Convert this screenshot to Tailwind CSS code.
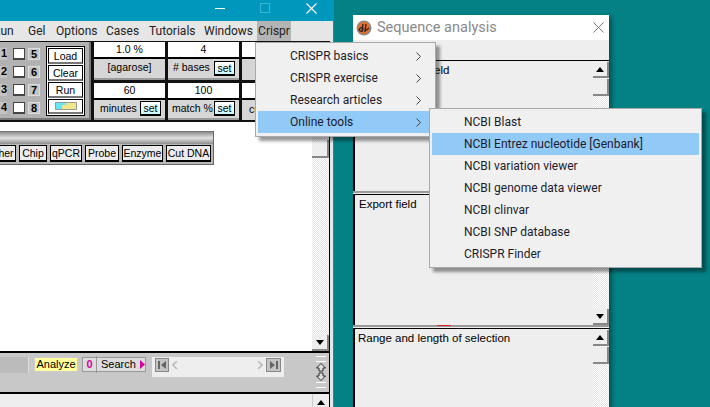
<!DOCTYPE html>
<html lang="en">
<head>
<meta charset="UTF-8">
<title>Crispr online tools</title>
<script src="https://cdn.jsdelivr.net/npm/@tailwindcss/browser@4"></script>
</head>
<body class="bg-[#038185] overflow-hidden">
<div class="relative w-[710px] h-[407px] overflow-hidden font-['Liberation_Sans',sans-serif] whitespace-nowrap">

  <!-- main window -->
  <div class="absolute left-0 top-0 w-[334px] h-[407px] bg-[#e6e6e6] border-r border-[#0097bd] flex flex-col overflow-hidden">
    <div class="h-[21px] shrink-0 bg-[#0097bd] flex items-center relative">
      <div class="absolute left-[215px] top-[8px] w-[10px] h-px bg-white"></div>
      <div class="absolute left-[260px] top-[3px] w-[10px] h-[10px] border border-[#3fb4d2]"></div>
      <svg class="absolute left-[306px] top-[3px]" width="11" height="11" viewBox="0 0 11 11"><path d="M0.5 0.5 10.5 10.5M10.5 0.5 0.5 10.5" stroke="#fff" stroke-width="1.1"/></svg>
    </div>
    <!-- menu bar -->
    <div class="h-[20px] shrink-0 bg-[#e6e6e6] flex items-center text-[12px] font-['Roboto',sans-serif] text-[#222] relative">
      <span class="ml-[-7px] w-[35px] shrink-0">Run</span>
      <span class="w-[28px] shrink-0">Gel</span>
      <span class="w-[50px] shrink-0">Options</span>
      <span class="w-[43px] shrink-0">Cases</span>
      <span class="w-[55px] shrink-0">Tutorials</span>
      <span class="w-[53px] shrink-0">Windows</span>
      <span class="w-[34px] shrink-0 h-[20px] leading-[20px] bg-[#b4b4b4] text-center">Crispr</span>
    </div>
    <div class="flex-1 mr-[3px] bg-white flex flex-col min-h-0 border-r-[1px] border-black">
      <!-- toolbar -->
      <div class="h-[81px] shrink-0 bg-[#111] flex gap-[3px] pt-px pb-[2px] text-[10.5px] text-black">
        <div class="w-[91px] bg-[#b2b2b2] border-r-2 border-b-2 border-[#777] flex pt-[6px]">
          <div class="w-[46px] grid grid-cols-[13px_12px_15px] gap-y-[6px] content-start font-bold text-[11px] text-center leading-[11px]">
            <span class="w-[7px] h-[12px] bg-[#c4c4c4] overflow-hidden text-right">1</span><span class="h-[12px] bg-white border border-[#444] border-b-2"></span><span class="w-[12px] h-[12px] ml-[3px] bg-[#c4c4c4] border border-[#ddd]">5</span>
            <span class="w-[7px] h-[12px] bg-[#c4c4c4] overflow-hidden text-right">2</span><span class="h-[12px] bg-white border border-[#444] border-b-2"></span><span class="w-[12px] h-[12px] ml-[3px] bg-[#c4c4c4] border border-[#ddd]">6</span>
            <span class="w-[7px] h-[12px] bg-[#c4c4c4] overflow-hidden text-right">3</span><span class="h-[12px] bg-white border border-[#444] border-b-2"></span><span class="w-[12px] h-[12px] ml-[3px] bg-[#c4c4c4] border border-[#ddd]">7</span>
            <span class="w-[7px] h-[12px] bg-[#c4c4c4] overflow-hidden text-right">4</span><span class="h-[12px] bg-white border border-[#444] border-b-2"></span><span class="w-[12px] h-[12px] ml-[3px] bg-[#c4c4c4] border border-[#ddd]">8</span>
          </div>
          <div class="w-[39px] h-[70px] mt-[-2px] border border-black bg-white flex flex-col gap-px p-px">
            <div class="h-[16px] border border-black border-b-2 border-b-[#777] bg-white text-center leading-[14px]">Load</div>
            <div class="h-[16px] border border-black border-b-2 border-b-[#777] bg-white text-center leading-[14px]">Clear</div>
            <div class="h-[16px] border border-black border-b-2 border-b-[#777] bg-white text-center leading-[14px]">Run</div>
            <div class="h-[15px] border border-black border-b-2 border-b-[#777] bg-white flex items-center justify-center">
              <svg width="22" height="8" viewBox="0 0 22 8"><rect width="22" height="8" fill="#f2e68a"/><path d="M0 0H11V3H7V8H0Z" fill="#62e6fa"/><path d="M0 .5H21.5V7.5H.5V0" fill="none" stroke="#999"/></svg>
            </div>
          </div>
        </div>

        <div class="w-[71px] flex flex-col gap-[3px]">
          <div class="flex-1 bg-[#d6d6d6] flex flex-col">
            <div class="h-[17px] bg-white text-center leading-[15px] border-b-2 border-black">1.0 %</div>
            <div class="flex-1 flex items-center justify-center border-b-2 border-[#999]">[agarose]</div>
          </div>
          <div class="flex-1 bg-[#d6d6d6] flex flex-col">
            <div class="h-[17px] bg-white text-center leading-[15px] border-b-2 border-black">60</div>
            <div class="flex-1 flex items-center justify-between pl-[6px] pr-[4px] border-b-2 border-[#999]"><span>minutes</span><span class="w-[21px] text-center bg-gradient-to-b from-white to-[#c8fbff] border border-black border-b-2 leading-[12px]">set</span></div>
          </div>
        </div>

        <div class="w-[71px] flex flex-col gap-[3px]">
          <div class="flex-1 bg-[#d6d6d6] flex flex-col">
            <div class="h-[17px] bg-white text-center leading-[15px] border-b-2 border-black">4</div>
            <div class="flex-1 flex items-center justify-between pl-[5px] pr-[4px] border-b-2 border-[#999]"><span># bases</span><span class="w-[21px] text-center bg-gradient-to-b from-white to-[#c8fbff] border border-black border-b-2 leading-[12px]">set</span></div>
          </div>
          <div class="flex-1 bg-[#d6d6d6] flex flex-col">
            <div class="h-[17px] bg-white text-center leading-[15px] border-b-2 border-black">100</div>
            <div class="flex-1 flex items-center justify-between pl-[4px] pr-[4px] border-b-2 border-[#999]"><span>match %</span><span class="w-[21px] text-center bg-gradient-to-b from-white to-[#c8fbff] border border-black border-b-2 leading-[12px]">set</span></div>
          </div>
        </div>

        <div class="w-[71px] flex flex-col gap-[3px]">
          <div class="flex-1 bg-[#d6d6d6] flex flex-col"><div class="h-[17px] bg-white border-b-2 border-black"></div></div>
          <div class="flex-1 bg-[#d6d6d6] flex flex-col">
            <div class="h-[17px] bg-white border-b-2 border-black"></div>
            <div class="flex-1 flex items-center px-[7px]">cut</div>
          </div>
        </div>
        <div class="flex-1 bg-[#d6d6d6]"></div>
      </div>

      <!-- work area -->
      <div class="flex-1 flex min-h-0">
        <div class="flex-1 pt-[9px] overflow-hidden">
          <div class="w-[214px] h-[34px] bg-[#b9b9b9] border-r border-b border-[#666]">
            <div class="h-[13px] bg-gradient-to-b from-[#8e8e8e] via-[#e2e2e2] to-[#8e8e8e] border-t border-[#777]"></div>
            <div class="flex gap-[3px] ml-[-15px] mt-px text-[10.5px] leading-[14px] text-center">
              <span class="w-[31px] h-[17px] shrink-0 bg-[#ececec] border border-black border-b-2 overflow-hidden">Other</span>
              <span class="w-[28px] h-[17px] shrink-0 bg-[#ececec] border border-black border-b-2">Chip</span>
              <span class="w-[32px] h-[17px] shrink-0 bg-[#ececec] border border-black border-b-2">qPCR</span>
              <span class="w-[34px] h-[17px] shrink-0 bg-[#ececec] border border-black border-b-2">Probe</span>
              <span class="w-[41px] h-[17px] shrink-0 bg-[#ececec] border border-black border-b-2">Enzyme</span>
              <span class="w-[45px] h-[17px] shrink-0 bg-[#ececec] border border-black border-b-2">Cut DNA</span>
            </div>
          </div>
        </div>
        <!-- scrollbar -->
        <div class="w-[17px] flex flex-col bg-[repeating-conic-gradient(#e4e4e4_0_25%,#ffffff_0_50%)] bg-[length:2px_2px]">
          <div class="h-[18px] bg-[#eee] mt-[18px] border-b-2 border-r-2 border-[#888]"></div>
          <div class="flex-1"></div>
          <div class="h-[16px] bg-[#eee] border-b-2 border-r-2 border-[#888] flex items-center justify-center">
            <svg width="8" height="5"><path d="M0 0H8L4 5Z" fill="#000"/></svg>
          </div>
        </div>
      </div>

      <!-- bottom status panel -->
      <div class="h-[43px] shrink-0 bg-[#c8c8c8] border-y-2 border-black flex pt-[4px] relative text-[11px]">
        <div class="w-[29px] h-[16px] bg-[#bbb] border-r border-[#ddd]"></div>
        <div class="ml-[5px] w-[44px] h-[15px] bg-[#ffff9c] border border-[#ccc] text-center leading-[13px]">Analyze</div>
        <div class="ml-[4px] w-[64px] h-[15px] bg-[#ddd] border border-[#999] flex items-center">
          <span class="w-[14px] text-center font-bold text-[#d4009c] border-r border-[#999]">0</span>
          <span class="ml-[4px] w-[35px]">Search</span>
          <svg class="ml-[4px]" width="5" height="9"><path d="M0 0 5 4.5 0 9Z" fill="#d4009c"/></svg>
        </div>
        <div class="ml-[6px] w-[132px] h-[20px] bg-[#eee] flex items-start pt-px px-[3px]">
          <span class="w-[14px] h-[14px] bg-[#c4c4c4] border border-[#888] flex items-center justify-center"><svg width="8" height="8"><path d="M0 0H2V8H0ZM8 0 3 4 8 8Z" fill="#666"/></svg></span>
          <svg class="ml-[3px] mt-[3px]" width="6" height="8"><path d="M5 0 1 4 5 8" fill="none" stroke="#bbb" stroke-width="1.6"/></svg>
          <div class="flex-1"></div>
          <svg class="mr-[3px] mt-[3px]" width="6" height="8"><path d="M1 0 5 4 1 8" fill="none" stroke="#bbb" stroke-width="1.6"/></svg>
          <span class="w-[15px] h-[14px] bg-[#c4c4c4] border border-[#888] flex items-center justify-center"><svg width="8" height="8"><path d="M8 0H6V8H8ZM0 0 5 4 0 8Z" fill="#666"/></svg></span>
        </div>
        <div class="absolute right-[3px] top-[3px] w-[10px] flex flex-col items-center gap-px">
          <div class="w-full h-[6px] border-y border-[#fff]"></div>
          <svg width="10" height="18" viewBox="0 0 10 18"><path d="M5 .5 9.5 5H7V8H3V5H.5ZM3 10H7V13H9.5L5 17.5 .5 13H3Z" fill="#ddd" stroke="#333"/></svg>
          <div class="w-full h-[6px] border-y border-[#fff]"></div>
        </div>
      </div>
      <div class="h-[13px] shrink-0 bg-[#eee] flex justify-end">
        <div class="w-[17px] bg-[#eee] border-l border-[#ccc] flex justify-center pt-[6px]"><svg width="8" height="5"><path d="M0 5H8L4 0Z" fill="#000"/></svg></div>
      </div>
    </div>
  </div>

  <!-- sequence analysis window -->
  <div class="absolute left-[353px] top-[15px] w-[256px] h-[392px] bg-[#eee] flex flex-col shadow-[3px_2px_4px_rgba(0,0,0,0.35)]">
    <div class="h-[25px] shrink-0 bg-white flex items-center relative font-['Roboto',sans-serif] text-[14.5px] text-[#8a8a8a]">
      <svg class="ml-[3px]" width="16" height="16" viewBox="0 0 16 16"><circle cx="8" cy="8" r="7.5" fill="#8a8a8a"/><circle cx="8" cy="8" r="6" fill="#e8702a"/><path d="M3 10C4 7 7 7 7 9S4 12 3 10M7 4 6 12M10 4 9 11 13 8" fill="none" stroke="#222" stroke-width="1.3"/></svg>
      <span class="ml-[5px]">Sequence analysis</span>
      <svg class="absolute right-[5px] top-[7px]" width="11" height="11" viewBox="0 0 11 11"><path d="M.5 .5 10.5 10.5M10.5 .5 .5 10.5" stroke="#777" stroke-width="1"/></svg>
    </div>
    <div class="h-[20px] shrink-0"></div>
    <div class="flex-1 flex flex-col min-h-0 text-[11.5px] leading-[16px] text-black">
      <div class="h-[131px] border-t border-black border-l-2 flex">
        <div class="flex-1 pl-[79px] pt-px">eld</div>
        <div class="w-[16px] flex flex-col bg-[repeating-conic-gradient(#e4e4e4_0_25%,#ffffff_0_50%)] bg-[length:2px_2px]">
          <div class="h-[16px] bg-[#eee] mt-px border-r-2 border-b-2 border-[#888] flex justify-center pt-[5px]"><svg width="8" height="5"><path d="M0 5H8L4 0Z" fill="#000"/></svg></div>
          <div class="h-[17px] bg-[#eee] mt-px border-r-2 border-b-2 border-[#888]"></div>
        </div>
      </div>
      <div class="h-[3px] bg-[#eee] border-t-2 border-[#999]"></div>
      <div class="h-[131px] border-t border-black border-l-2 flex">
        <div class="flex-1 pl-[4px] pt-px">Export field</div>
        <div class="w-[16px] flex flex-col justify-end bg-[repeating-conic-gradient(#e4e4e4_0_25%,#ffffff_0_50%)] bg-[length:2px_2px]">
          <div class="h-[16px] bg-[#eee] border-r-2 border-b-2 border-[#888] flex justify-center pt-[5px]"><svg width="8" height="5"><path d="M0 0H8L4 5Z" fill="#000"/></svg></div>
        </div>
      </div>
      <div class="h-[3px] bg-[#eee] border-t-2 border-[#999] relative"><div class="absolute left-[84px] top-[-2px] w-[14px] h-[2px] border-t border-[#d22]"></div></div>
      <div class="flex-1 border-t border-black border-l-2 flex">
        <div class="flex-1 pl-[3px] pt-px">Range and length of selection</div>
        <div class="w-[16px] flex flex-col bg-[repeating-conic-gradient(#e4e4e4_0_25%,#ffffff_0_50%)] bg-[length:2px_2px]">
          <div class="h-[16px] bg-[#eee] mt-px border-r-2 border-b-2 border-[#888] flex justify-center pt-[5px]"><svg width="8" height="5"><path d="M0 5H8L4 0Z" fill="#000"/></svg></div>
          <div class="h-[17px] bg-[#eee] mt-px border-r-2 border-b-2 border-[#888]"></div>
        </div>
      </div>
    </div>
  </div>

  <!-- crispr menu -->
  <div class="absolute left-[255px] top-[42px] w-[181px] h-[95px] bg-[#f0f0f0] border border-[#a8a8a8] p-[2px] shadow-[4px_4px_3px_rgba(0,0,0,0.4)] font-['Roboto',sans-serif] text-[12px] text-[#1c1c2c]">
    <div class="h-[22px] flex items-center justify-between pl-[32px] pr-[12px]"><span>CRISPR basics</span><svg width="5" height="9"><path d="M.5 .5 4.5 4.5 .5 8.5" fill="none" stroke="#444"/></svg></div>
    <div class="h-[22px] flex items-center justify-between pl-[32px] pr-[12px]"><span>CRISPR exercise</span><svg width="5" height="9"><path d="M.5 .5 4.5 4.5 .5 8.5" fill="none" stroke="#444"/></svg></div>
    <div class="h-[22px] flex items-center justify-between pl-[32px] pr-[12px]"><span>Research articles</span><svg width="5" height="9"><path d="M.5 .5 4.5 4.5 .5 8.5" fill="none" stroke="#444"/></svg></div>
    <div class="h-[22px] flex items-center justify-between pl-[32px] pr-[12px] bg-[#91c9f7]"><span>Online tools</span><svg width="5" height="9"><path d="M.5 .5 4.5 4.5 .5 8.5" fill="none" stroke="#444"/></svg></div>
  </div>

  <!-- online tools submenu -->
  <div class="absolute left-[429px] top-[108px] w-[273px] h-[160px] bg-[#f0f0f0] border border-[#a8a8a8] p-[2px] shadow-[4px_4px_3px_rgba(0,0,0,0.4)] font-['Roboto',sans-serif] text-[12px] text-[#1c1c2c]">
    <div class="h-[22px] flex items-center pl-[32px]">NCBI Blast</div>
    <div class="h-[22px] flex items-center pl-[32px] bg-[#91c9f7]">NCBI Entrez nucleotide [Genbank]</div>
    <div class="h-[22px] flex items-center pl-[32px]">NCBI variation viewer</div>
    <div class="h-[22px] flex items-center pl-[32px]">NCBI genome data viewer</div>
    <div class="h-[22px] flex items-center pl-[32px]">NCBI clinvar</div>
    <div class="h-[22px] flex items-center pl-[32px]">NCBI SNP database</div>
    <div class="h-[22px] flex items-center pl-[32px]">CRISPR Finder</div>
  </div>
</div>
</body>
</html>
